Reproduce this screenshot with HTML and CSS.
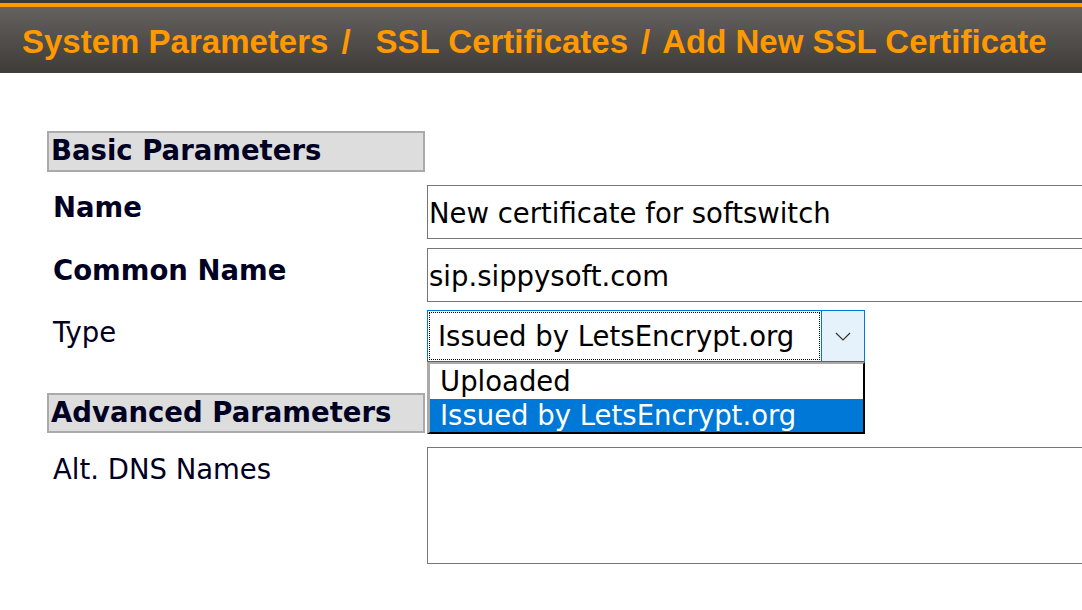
FILE: index.html
```html
<!DOCTYPE html>
<html lang="en">
<head>
<meta charset="utf-8">
<title>Add New SSL Certificate</title>
<link rel="stylesheet" href="styles.css">
</head>
<body>
<header class="topbar">
  <h1 class="crumbs"><span class="crumb">System Parameters</span><span class="sep">/</span><span class="crumb">SSL Certificates</span><span class="sep sep-tight">/</span><span class="crumb">Add New SSL Certificate</span></h1>
</header>
<main class="page">
  <section class="section">
    <h2 class="section-title">Basic Parameters</h2>
    <div class="rows">
      <div class="row row-name">
        <label class="label bold">Name</label>
        <div class="field"><input class="text-input" type="text" value="New certificate for softswitch"></div>
      </div>
      <div class="row row-cn">
        <label class="label bold">Common Name</label>
        <div class="field"><input class="text-input" type="text" value="sip.sippysoft.com"></div>
      </div>
      <div class="row row-type">
        <label class="label">Type</label>
        <div class="field">
          <div class="select">
            <div class="select-value"><span class="focus-ring">Issued by LetsEncrypt.org</span></div>
            <div class="select-button">
              <svg width="16" height="9" viewBox="0 0 16 9" aria-hidden="true"><path d="M1 1 L8 8 L15 1" fill="none" stroke="#333" stroke-width="1.2"/></svg>
            </div>
            <ul class="select-list">
              <li class="option">Uploaded</li>
              <li class="option selected">Issued by LetsEncrypt.org</li>
            </ul>
          </div>
        </div>
      </div>
    </div>
  </section>
  <section class="section section-adv">
    <h2 class="section-title">Advanced Parameters</h2>
    <div class="rows">
      <div class="row row-dns">
        <label class="label">Alt. DNS Names</label>
        <div class="field"><textarea class="text-area"></textarea></div>
      </div>
    </div>
  </section>
</main>
</body>
</html>
```
FILE: styles.css
```css
html, body {
  margin: 0;
  padding: 0;
  background: #ffffff;
  overflow: hidden;
}
body {
  width: 1082px;
  height: 610px;
  font-family: "DejaVu Sans", Verdana, sans-serif;
  font-size: 27.5px;
  color: #000022;
}

.topbar {
  border-top: 3px solid #3b3937;
  height: 66px;
  padding-top: 4px;
  background: linear-gradient(to bottom, #ff9900 0, #ff9900 4px, #65615f 4px, #3f3b39 100%);
  display: flex;
  align-items: center;
}
.crumbs {
  margin: 0 0 0 22px;
  font-family: "Liberation Sans", Arial, sans-serif;
  font-weight: bold;
  font-size: 33px;
  color: #ff9900;
  white-space: nowrap;
  line-height: 1;
  padding-top: 2px;
}
.sep {
  margin: 0 25px 0 13px;
}
.sep-tight {
  margin: 0 12px 0 13px;
}

.page {
  padding: 58px 0 0 47px;
}
.section-title {
  margin: 0;
  box-sizing: border-box;
  width: 378px;
  height: 41px;
  border: 2px solid #aaaaaa;
  background: #dddddd;
  font-size: 27.5px;
  font-weight: bold;
  line-height: 35px;
  padding-left: 2px;
  color: #000022;
  white-space: nowrap;
}
.rows {
  display: flex;
  flex-direction: column;
  margin-top: 13px;
}
.row {
  display: grid;
  grid-template-columns: 380px 1fr;
  align-items: start;
}
.row-cn { margin-top: 9px; }
.row-type { margin-top: 8px; }
.label {
  padding-left: 6px;
  line-height: 27px;
  padding-top: 9px;
  white-space: nowrap;
}
.bold { font-weight: bold; }

.text-input {
  box-sizing: border-box;
  width: 720px;
  height: 54px;
  border: 1px solid #767676;
  font-family: "DejaVu Sans", Verdana, sans-serif;
  font-size: 27.5px;
  padding: 2px 0 0 1px;
  color: #000000;
  background: #ffffff;
  outline: none;
}

.select {
  position: relative;
  box-sizing: border-box;
  width: 438px;
  height: 52px;
  border: 1px solid #0078d7;
  display: flex;
  background: #ffffff;
}
.select-value {
  flex: 1;
  padding: 1px;
  display: flex;
}
.focus-ring {
  flex: 1;
  border: 1px dotted #000000;
  padding-left: 8px;
  line-height: 46px;
  color: #000000;
  white-space: nowrap;
}
.select-button {
  width: 42px;
  border-left: 1px solid #0078d7;
  background: #e5f1fb;
  display: flex;
  align-items: center;
  justify-content: center;
}
.select-list {
  position: absolute;
  left: -1px;
  top: 51px;
  width: 438px;
  box-sizing: border-box;
  margin: 0;
  padding: 0;
  list-style: none;
  background: #ffffff;
  border-top: 2px solid #aaaaaa;
  border-left: 3px solid #aaaaaa;
  border-right: 2px solid #000000;
  border-bottom: 2px solid #000000;
}
.option {
  padding-left: 10px;
  color: #000000;
  height: 35px;
  line-height: 35px;
  white-space: nowrap;
}
.option.selected {
  background: #0078d7;
  color: #ffffff;
  height: 33px;
  line-height: 33px;
}

.section-adv {
  margin-top: 31px;
}
.section-adv .section-title {
  height: 40px;
  line-height: 34px;
}
.section-adv .rows {
  margin-top: 14px;
}
.text-area {
  box-sizing: border-box;
  display: block;
  width: 720px;
  height: 117px;
  border: 1px solid #767676;
  resize: none;
  font-family: "DejaVu Sans", Verdana, sans-serif;
  font-size: 27.5px;
}
```
